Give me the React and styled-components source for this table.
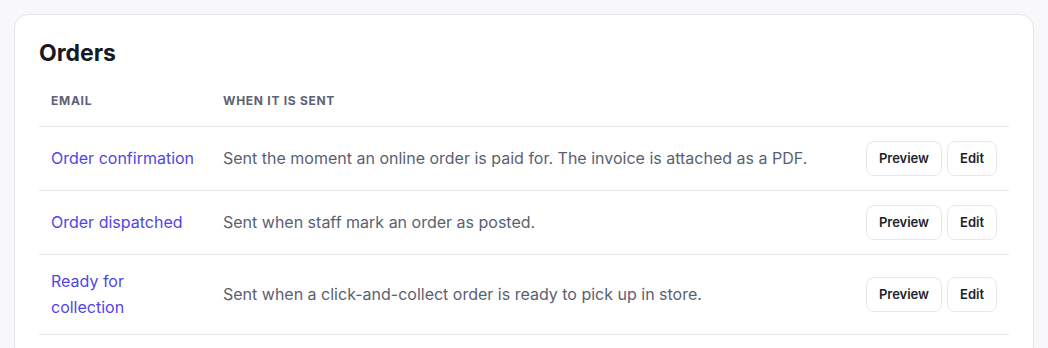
import React from "react";
import styled, { createGlobalStyle } from "styled-components";

const GlobalStyle = createGlobalStyle`
  body {
    margin: 0;
    background: #f8f8fb;
    font-family: Inter, "Noto Sans", sans-serif;
  }
`;

const emails = [
  {
    name: "Order confirmation",
    when: "Sent the moment an online order is paid for. The invoice is attached as a PDF.",
  },
  {
    name: "Order dispatched",
    when: "Sent when staff mark an order as posted.",
  },
  {
    name: "Ready for collection",
    when: "Sent when a click-and-collect order is ready to pick up in store.",
  },
];

const Page = styled.div`
  padding: 14px;
`;

const Card = styled.section`
  background: #fff;
  border: 1px solid #e6e6ee;
  border-radius: 14px;
  padding: 22px 24px 24px;
`;

const Title = styled.h2`
  margin: 0 0 12px;
  font-size: 23px;
  line-height: 32px;
  font-weight: 700;
  color: #171923;
`;

const Table = styled.table`
  width: 100%;
  border-collapse: collapse;
  table-layout: fixed;
`;

const Col = styled.col`
  width: ${(p) => p.$width || "auto"};
`;

const Th = styled.th`
  text-align: left;
  padding: 12px 12px 17px;
  font-size: 12px;
  line-height: 16px;
  font-weight: 700;
  letter-spacing: 0.06em;
  text-transform: uppercase;
  color: #5d6275;
  border-bottom: 1px solid #e6e6ee;
`;

const Td = styled.td`
  padding: 14px 12px;
  font-size: 16px;
  line-height: 25.5px;
  color: #5a5f72;
  vertical-align: middle;
  border-bottom: 1px solid #e6e6ee;
`;

const NameLink = styled.a`
  color: #4f46e5;
  text-decoration: none;
`;

const Actions = styled.div`
  display: flex;
  justify-content: flex-end;
  gap: 5px;
`;

const Button = styled.button`
  font-family: inherit;
  font-size: 13px;
  line-height: 17px;
  font-weight: 600;
  color: #1d1f2b;
  background: #fff;
  border: 1px solid #e6e6ee;
  border-radius: 8px;
  padding: 8px 12px;
  cursor: pointer;
`;

export default function App() {
  return (
    <>
      <GlobalStyle />
      <Page>
        <Card>
          <Title>Orders</Title>
          <Table>
            <colgroup>
              <Col $width="172px" />
              <Col />
              <Col $width="160px" />
            </colgroup>
            <thead>
              <tr>
                <Th>Email</Th>
                <Th>When it is sent</Th>
                <Th />
              </tr>
            </thead>
            <tbody>
              {emails.map((email) => (
                <tr key={email.name}>
                  <Td>
                    <NameLink href="#">{email.name}</NameLink>
                  </Td>
                  <Td>{email.when}</Td>
                  <Td>
                    <Actions>
                      <Button>Preview</Button>
                      <Button>Edit</Button>
                    </Actions>
                  </Td>
                </tr>
              ))}
            </tbody>
          </Table>
        </Card>
      </Page>
    </>
  );
}
